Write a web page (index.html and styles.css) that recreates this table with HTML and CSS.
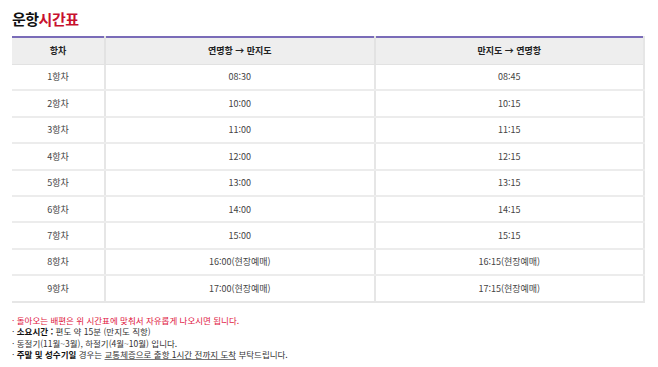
FILE: index.html
```html
<!DOCTYPE html>
<html lang="ko">
<head>
    <meta charset="UTF-8">
    <meta name="viewport" content="width=device-width, initial-scale=1.0">
    <title>운항시간표</title>
    <link rel="stylesheet" href="styles.css">
</head>
<body>
    <div class="schedule">
        <h2 class="title">운항<span class="accent">시간표</span></h2>

        <table class="timetable">
            <thead>
                <tr>
                    <th class="col-no">항차</th>
                    <th>연명항 → 만지도</th>
                    <th>만지도 → 연명항</th>
                </tr>
            </thead>
            <tbody>
                <tr><td>1항차</td><td>08:30</td><td>08:45</td></tr>
                <tr><td>2항차</td><td>10:00</td><td>10:15</td></tr>
                <tr><td>3항차</td><td>11:00</td><td>11:15</td></tr>
                <tr><td>4항차</td><td>12:00</td><td>12:15</td></tr>
                <tr><td>5항차</td><td>13:00</td><td>13:15</td></tr>
                <tr><td>6항차</td><td>14:00</td><td>14:15</td></tr>
                <tr><td>7항차</td><td>15:00</td><td>15:15</td></tr>
                <tr><td>8항차</td><td>16:00(현장예매)</td><td>16:15(현장예매)</td></tr>
                <tr><td>9항차</td><td>17:00(현장예매)</td><td>17:15(현장예매)</td></tr>
            </tbody>
        </table>

        <ul class="notes">
            <li class="warn">· 돌아오는 배편은 위 시간표에 맞춰서 자유롭게 나오시면 됩니다.</li>
            <li>· <strong>소요시간 :</strong> 편도 약 15분 (만지도 직항)</li>
            <li>· 동절기(11월~3월), 하절기(4월~10월) 입니다.</li>
            <li>· <strong>주말 및 성수기일</strong> 경우는 <u>교통체증으로 출항 1시간 전까지 도착</u> 부탁드립니다.</li>
        </ul>
    </div>
</body>
</html>
```

FILE: styles.css
```css
* {
    margin: 0;
    padding: 0;
    box-sizing: border-box;
}

body {
    font-family: "Noto Sans CJK KR", "Noto Sans", sans-serif;
    background: #fff;
    color: #333;
}

.schedule {
    padding: 9px 13px 0 12px;
}

.title {
    font-size: 15px;
    font-weight: 700;
    color: #111;
    line-height: 20px;
    letter-spacing: -0.5px;
    margin-bottom: 7px;
}

.title .accent {
    color: #c8102e;
}

.timetable {
    width: 633px;
    border-collapse: collapse;
    border-top: 2px solid #7a6cb8;
    border-right: 2px solid #e6e6e6;
    border-bottom: 2px solid #e6e6e6;
    font-size: 9px;
    text-align: center;
}

.timetable th {
    background: #eeeeee;
    color: #222;
    font-weight: 700;
    height: 27px;
    border-left: 2px solid #e2e2e2;
    border-bottom: 1px solid #e2e2e2;
}

.timetable th.col-no {
    width: 93px;
}

.timetable td {
    height: 26.4px;
    color: #444;
    border-left: 2px solid #e6e6e6;
    border-bottom: 2px solid #ececec;
}

.timetable th:first-child,
.timetable td:first-child {
    border-left: none;
}

.timetable tbody tr:last-child td {
    border-bottom: none;
}

.notes {
    list-style: none;
    margin-top: 12px;
    font-size: 8.5px;
    line-height: 11.5px;
    color: #333;
}

.notes .warn {
    color: #e0173f;
}

.notes strong {
    color: #111;
}

.notes u {
    text-decoration-color: #777;
    text-decoration-thickness: 1px;
}
```
